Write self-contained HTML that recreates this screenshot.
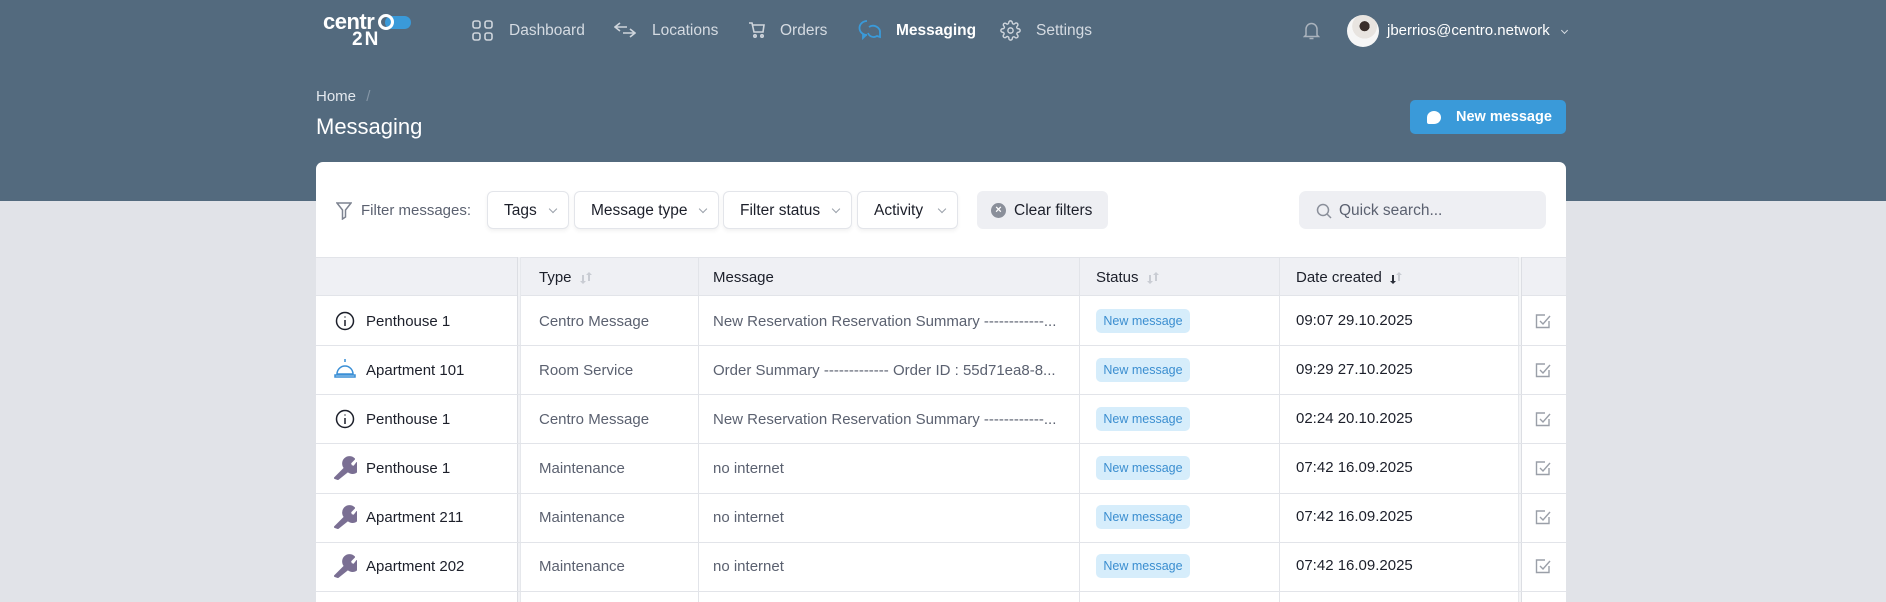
<!DOCTYPE html>
<html><head><meta charset="utf-8"><style>
*{box-sizing:border-box;margin:0;padding:0}
body{width:1886px;height:596px;overflow:hidden;background:#e1e3e8;font-family:"Liberation Sans",sans-serif;position:relative;color:#1c1f2a}
.hdr{position:absolute;left:0;top:0;width:1886px;height:201px;background:#536a7e}
.a{position:absolute;white-space:nowrap}
.nav{font-size:15.5px;color:#d5dbe2;top:22px}
.card{position:absolute;left:316px;top:162px;width:1250px;height:440px;background:#fff;border-radius:7px 7px 0 0;overflow:hidden}
.btn{position:absolute;top:29px;height:38px;border:1px solid #e3e5ea;border-radius:6px;background:#fff;box-shadow:0 2px 4px rgba(0,0,0,.06);font-size:15.5px;line-height:38px;padding-left:16px;color:#1c1f2a}
.btn:after{content:"";position:absolute;right:12px;top:14px;width:5px;height:5px;border-right:1.3px solid #9aa0aa;border-bottom:1.3px solid #9aa0aa;transform:rotate(45deg)}
.th{position:absolute;top:95px;height:39px;left:0;width:1250px;background:#eff0f4;border-top:1px solid #e2e4e9;border-bottom:1px solid #e2e4e9}
.vl{position:absolute;top:95px;width:1px;height:345px;background:#e2e4e9}
.hl{position:absolute;left:0;width:1250px;height:1px;background:#e2e4e9}
.t{position:absolute;font-size:15px;white-space:nowrap}
.g{color:#5b6170}
.badge{position:absolute;left:780px;width:94px;height:24px;background:#d6edfb;border-radius:5px;color:#3b8ed0;font-size:12.5px;line-height:24px;text-align:center}
.sort{display:inline-block;margin-left:8px;vertical-align:middle}
</style></head><body>
<div class="hdr"></div>
<!-- logo -->
<div class="a" style="left:323px;top:9px;font-size:22px;font-weight:bold;color:#fff;letter-spacing:-0.5px">centr</div>
<div class="a" style="left:385px;top:16px;width:26px;height:13px;background:#3a9ad9;border-radius:7px"></div>
<div class="a" style="left:378px;top:14px;width:16px;height:16px;border:3px solid #fff;border-radius:50%"></div>
<div class="a" style="left:352px;top:29px;font-size:19px;font-weight:bold;color:#fff;letter-spacing:2px">2N</div>
<!-- nav -->
<svg class="a" style="left:472px;top:20px" width="21" height="21" viewBox="0 0 21 21" fill="none" stroke="#cfd5dc" stroke-width="1.6"><rect x="1" y="1" width="7" height="7" rx="2"/><rect x="13" y="1" width="7" height="7" rx="2"/><rect x="1" y="13" width="7" height="7" rx="2"/><rect x="13" y="13" width="7" height="7" rx="2"/></svg>
<div class="a nav" style="left:509px">Dashboard</div>
<svg class="a" style="left:614px;top:21px" width="22" height="18" viewBox="0 0 22 18" fill="none" stroke="#cfd5dc" stroke-width="1.6"><path d="M6 2L1 6l5 4M1 6h12M16 8l5 4-5 4M21 12H9"/></svg>
<div class="a nav" style="left:652px">Locations</div>
<svg class="a" style="left:748px;top:21px" width="18" height="18" viewBox="0 0 18 18" fill="none" stroke="#cfd5dc" stroke-width="1.6"><path d="M1 2h3l2 9h9l1-7H5"/><circle cx="7" cy="15" r="1.2"/><circle cx="14" cy="15" r="1.2"/></svg>
<div class="a nav" style="left:780px">Orders</div>
<svg class="a" style="left:858px;top:19px" width="24" height="22" viewBox="0 0 24 22" fill="none" stroke="#3a9ad9" stroke-width="1.8"><path d="M9 2a7.5 7 0 1 0 0 14h-1l-3 3v-4"/><path d="M11 8a7 6.5 0 0 1 11 6v4l-3-1a6 6 0 0 1-9-3"/></svg>
<div class="a nav" style="left:896px;color:#fff;font-weight:bold">Messaging</div>
<svg class="a" style="left:1000px;top:20px" width="21" height="21" viewBox="0 0 24 24" fill="none" stroke="#cfd5dc" stroke-width="1.6"><circle cx="12" cy="12" r="3"/><path d="M19.4 15a1.7 1.7 0 0 0 .3 1.8l.1.1a2 2 0 1 1-2.8 2.8l-.1-.1a1.7 1.7 0 0 0-2.8 1.2V21a2 2 0 1 1-4 0v-.1A1.7 1.7 0 0 0 7.3 19.3l-.1.1a2 2 0 1 1-2.8-2.8l.1-.1A1.7 1.7 0 0 0 3.1 14H3a2 2 0 1 1 0-4h.1A1.7 1.7 0 0 0 4.7 7.3l-.1-.1a2 2 0 1 1 2.8-2.8l.1.1A1.7 1.7 0 0 0 10 3.1V3a2 2 0 1 1 4 0v.1a1.7 1.7 0 0 0 2.8 1.2l.1-.1a2 2 0 1 1 2.8 2.8l-.1.1A1.7 1.7 0 0 0 20.9 10H21a2 2 0 1 1 0 4h-.1a1.7 1.7 0 0 0-1.5 1z"/></svg>
<div class="a nav" style="left:1036px">Settings</div>
<svg class="a" style="left:1303px;top:22px" width="17" height="18" viewBox="0 0 17 18" fill="none" stroke="#aab3bd" stroke-width="1.5"><path d="M3 13V7a5.5 5.5 0 0 1 11 0v6l1.5 1.5h-14zM6.5 16.5h4"/></svg>
<div class="a" style="left:1347px;top:15px;width:32px;height:32px;border-radius:50%;background:radial-gradient(circle at 55% 35%,#3a2e2a 0 18%,#e8e4e0 19% 45%,#f6f6f6 46%);"></div>
<div class="a nav" style="left:1387px;color:#fff;font-size:15px">jberrios@centro.network</div>
<div class="a" style="left:1562px;top:28px;width:5px;height:5px;border-right:1.3px solid #d5dbe2;border-bottom:1.3px solid #d5dbe2;transform:rotate(45deg)"></div>
<!-- title -->
<div class="a" style="left:316px;top:88px;font-size:15px;color:#e3e8ee">Home <span style="color:#8596a6;margin-left:6px">/</span></div>
<div class="a" style="left:316px;top:114px;font-size:22px;color:#fff">Messaging</div>
<div class="a" style="left:1410px;top:100px;width:156px;height:34px;background:#3a9ad9;border-radius:5px"></div>
<div class="a" style="left:1427px;top:111px;width:14px;height:13px;background:#fff;border-radius:50% 50% 50% 2px"></div>
<div class="a" style="left:1456px;top:109px;font-size:14.5px;color:#fff;font-weight:bold">New message</div>
<!-- card -->
<div class="card">
<svg class="a" style="left:20px;top:40px" width="16" height="18" viewBox="0 0 16 18" fill="none" stroke="#7d8390" stroke-width="1.5"><path d="M1 1h14l-5.5 7v7l-3 2V8z"/></svg>
<div class="a g" style="left:45px;top:40px;font-size:15px">Filter messages:</div>
<div class="btn" style="left:171px;width:82px">Tags</div>
<div class="btn" style="left:258px;width:145px">Message type</div>
<div class="btn" style="left:407px;width:129px">Filter status</div>
<div class="btn" style="left:541px;width:101px">Activity</div>
<div class="a" style="left:661px;top:29px;width:131px;height:38px;background:#eeeff3;border-radius:6px"></div>
<div class="a" style="left:675px;top:41px;width:15px;height:15px;border-radius:50%;background:#8a8f9a;color:#fff;font-size:11px;line-height:15px;text-align:center;font-weight:bold">×</div>
<div class="a" style="left:698px;top:40px;font-size:15.5px">Clear filters</div>
<div class="a" style="left:983px;top:29px;width:247px;height:38px;background:#eeeff3;border-radius:7px"></div>
<svg class="a" style="left:1000px;top:41px" width="16" height="16" viewBox="0 0 16 16" fill="none" stroke="#8a8f9a" stroke-width="1.5"><circle cx="7" cy="7" r="5.5"/><path d="M11 11l4 4"/></svg>
<div class="a g" style="left:1023px;top:40px;font-size:15.5px">Quick search...</div>

<div class="th"></div>
<div class="a" style="left:201px;top:95px;width:4px;height:345px;background:#f1f2f5;border-left:1px solid #dcdee3;border-right:1px solid #e6e8ec"></div>
<div class="vl" style="left:382px"></div>
<div class="vl" style="left:763px"></div>
<div class="vl" style="left:963px"></div>
<div class="a" style="left:1202px;top:95px;width:4px;height:345px;background:#f4f5f7;border-left:1px solid #e6e8ec;border-right:1px solid #dcdee3"></div>
<div class="t" style="left:223px;top:107px">Type<svg class="sort" width="12" height="14" viewBox="0 0 12 14" fill="#c9ccd3"><path d="M3 13l-3-3h2V4h2v6h2zM9 1l3 3h-2v6H8V4H6z"/></svg></div>
<div class="t" style="left:397px;top:107px">Message</div>
<div class="t" style="left:780px;top:107px">Status<svg class="sort" width="12" height="14" viewBox="0 0 12 14" fill="#c9ccd3"><path d="M3 13l-3-3h2V4h2v6h2zM9 1l3 3h-2v6H8V4H6z"/></svg></div>
<div class="t" style="left:980px;top:107px">Date created<svg class="sort" width="12" height="14" viewBox="0 0 12 14"><path fill="#2a2e38" d="M3 13l-3-3h2V4h2v6h2z"/><path fill="#c9ccd3" d="M9 1l3 3h-2v6H8V4H6z"/></svg></div>

<div class="hl" style="top:183px"></div><div class="hl" style="top:232px"></div><div class="hl" style="top:281px"></div><div class="hl" style="top:331px"></div><div class="hl" style="top:380px"></div><div class="hl" style="top:429px"></div>

<svg class="a" style="left:19px;top:149px" width="20" height="20" viewBox="0 0 20 20" fill="none" stroke="#1c1f2a" stroke-width="1.5"><circle cx="10" cy="10" r="8.5"/><path d="M10 9v6M10 5.5v1"/></svg>
<svg class="a" style="left:17px;top:196px" width="24" height="22" viewBox="0 0 24 22" fill="none" stroke="#3a8fd6" stroke-width="1.5"><path d="M12 1v3M4 16a8 8 0 0 1 16 0zM2 17h20v2H2z"/></svg>
<svg class="a" style="left:19px;top:247px" width="20" height="20" viewBox="0 0 20 20" fill="none" stroke="#1c1f2a" stroke-width="1.5"><circle cx="10" cy="10" r="8.5"/><path d="M10 9v6M10 5.5v1"/></svg>
<svg class="a" style="left:16px;top:293px" width="25" height="25" viewBox="0 0 25 25"><path d="M3 23l10-10a6 6 0 0 1 9-9l-4 4 1 3 3 1 3-4a6 6 0 0 1-9 8L6 24z" fill="#7a6f93" stroke="#7a6f93" stroke-width="2" stroke-linejoin="round"/></svg>
<svg class="a" style="left:16px;top:342px" width="25" height="25" viewBox="0 0 25 25"><path d="M3 23l10-10a6 6 0 0 1 9-9l-4 4 1 3 3 1 3-4a6 6 0 0 1-9 8L6 24z" fill="#7a6f93" stroke="#7a6f93" stroke-width="2" stroke-linejoin="round"/></svg>
<svg class="a" style="left:16px;top:391px" width="25" height="25" viewBox="0 0 25 25"><path d="M3 23l10-10a6 6 0 0 1 9-9l-4 4 1 3 3 1 3-4a6 6 0 0 1-9 8L6 24z" fill="#7a6f93" stroke="#7a6f93" stroke-width="2" stroke-linejoin="round"/></svg>

<div class="t" style="left:50px;top:151px">Penthouse 1</div>
<div class="t" style="left:50px;top:200px">Apartment 101</div>
<div class="t" style="left:50px;top:249px">Penthouse 1</div>
<div class="t" style="left:50px;top:298px">Penthouse 1</div>
<div class="t" style="left:50px;top:347px">Apartment 211</div>
<div class="t" style="left:50px;top:396px">Apartment 202</div>

<div class="t g" style="left:223px;top:151px">Centro Message</div>
<div class="t g" style="left:223px;top:200px">Room Service</div>
<div class="t g" style="left:223px;top:249px">Centro Message</div>
<div class="t g" style="left:223px;top:298px">Maintenance</div>
<div class="t g" style="left:223px;top:347px">Maintenance</div>
<div class="t g" style="left:223px;top:396px">Maintenance</div>

<div class="t g" style="left:397px;top:151px">New Reservation Reservation Summary ------------...</div>
<div class="t g" style="left:397px;top:200px">Order Summary ------------- Order ID : 55d71ea8-8...</div>
<div class="t g" style="left:397px;top:249px">New Reservation Reservation Summary ------------...</div>
<div class="t g" style="left:397px;top:298px">no internet</div>
<div class="t g" style="left:397px;top:347px">no internet</div>
<div class="t g" style="left:397px;top:396px">no internet</div>

<div class="badge" style="top:147px">New message</div>
<div class="badge" style="top:196px">New message</div>
<div class="badge" style="top:245px">New message</div>
<div class="badge" style="top:294px">New message</div>
<div class="badge" style="top:343px">New message</div>
<div class="badge" style="top:392px">New message</div>

<div class="t" style="left:980px;top:150px">09:07 29.10.2025</div>
<div class="t" style="left:980px;top:199px">09:29 27.10.2025</div>
<div class="t" style="left:980px;top:248px">02:24 20.10.2025</div>
<div class="t" style="left:980px;top:297px">07:42 16.09.2025</div>
<div class="t" style="left:980px;top:346px">07:42 16.09.2025</div>
<div class="t" style="left:980px;top:395px">07:42 16.09.2025</div>

<svg class="a" style="left:1219px;top:151px" width="17" height="17" viewBox="0 0 17 17" fill="none" stroke="#9a9fa8" stroke-width="1.4"><path d="M14 8v6.5H1.5V2H10"/><path d="M5 8l3 3 7-8"/></svg>
<svg class="a" style="left:1219px;top:200px" width="17" height="17" viewBox="0 0 17 17" fill="none" stroke="#9a9fa8" stroke-width="1.4"><path d="M14 8v6.5H1.5V2H10"/><path d="M5 8l3 3 7-8"/></svg>
<svg class="a" style="left:1219px;top:249px" width="17" height="17" viewBox="0 0 17 17" fill="none" stroke="#9a9fa8" stroke-width="1.4"><path d="M14 8v6.5H1.5V2H10"/><path d="M5 8l3 3 7-8"/></svg>
<svg class="a" style="left:1219px;top:298px" width="17" height="17" viewBox="0 0 17 17" fill="none" stroke="#9a9fa8" stroke-width="1.4"><path d="M14 8v6.5H1.5V2H10"/><path d="M5 8l3 3 7-8"/></svg>
<svg class="a" style="left:1219px;top:347px" width="17" height="17" viewBox="0 0 17 17" fill="none" stroke="#9a9fa8" stroke-width="1.4"><path d="M14 8v6.5H1.5V2H10"/><path d="M5 8l3 3 7-8"/></svg>
<svg class="a" style="left:1219px;top:396px" width="17" height="17" viewBox="0 0 17 17" fill="none" stroke="#9a9fa8" stroke-width="1.4"><path d="M14 8v6.5H1.5V2H10"/><path d="M5 8l3 3 7-8"/></svg>
</div>
</body></html>
